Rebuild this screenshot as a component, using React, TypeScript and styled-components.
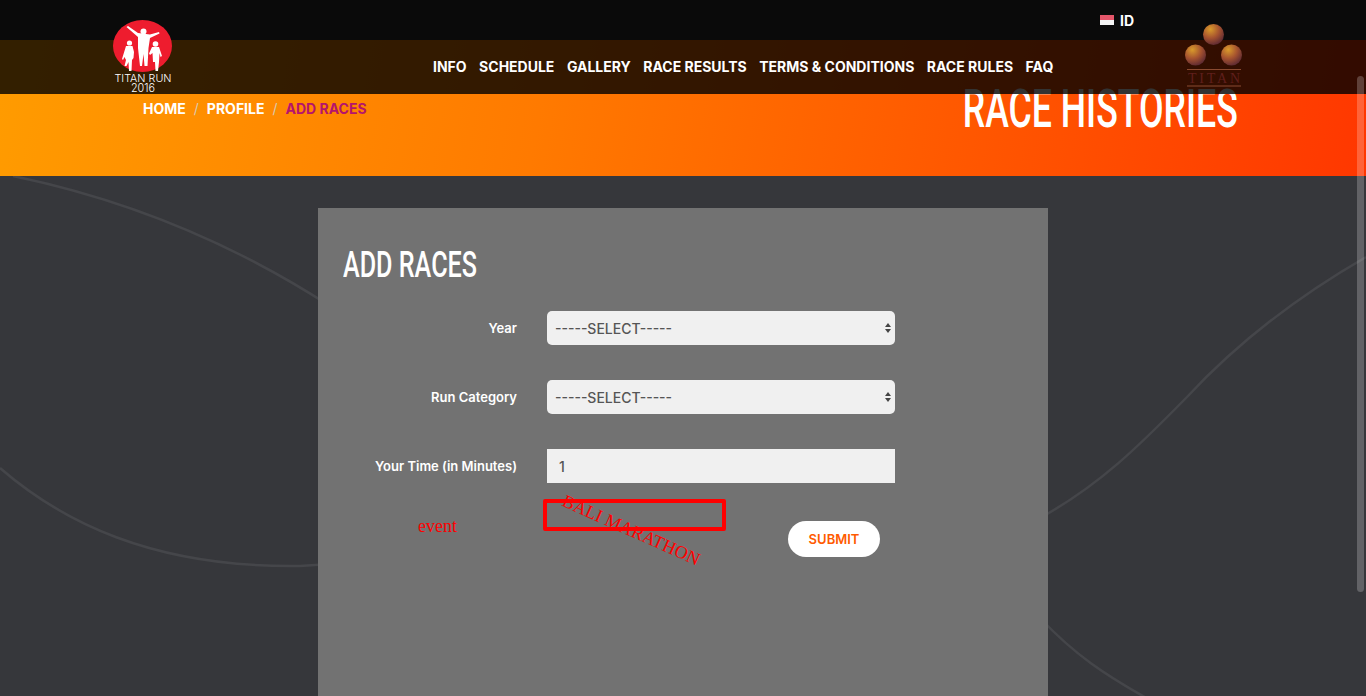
import React from 'react';
import styled, { createGlobalStyle } from 'styled-components';

const GlobalStyle = createGlobalStyle`
    html, body {
        margin: 0;
        height: 100%;
        overflow: hidden;
        background: #36373b;
    }
    * { box-sizing: border-box; }
`;

const Page = styled.div`
    position: relative;
    height: 696px;
    overflow: hidden;
    font-family: Inter, "Open Sans", sans-serif;
`;

const Header = styled.header`
    position: absolute;
    top: 0;
    left: 0;
    right: 0;
    z-index: 3;
`;

const TopBar = styled.div`
    height: 40px;
    background: #0a0a0a;
    display: flex;
    justify-content: flex-end;
    align-items: center;
    padding-right: 232px;
`;

const Lang = styled.a`
    display: flex;
    align-items: center;
    gap: 6px;
    color: #fff;
    font-size: 14px;
    font-weight: 700;
`;

const Flag = styled.span`
    width: 14px;
    height: 10px;
    background: linear-gradient(#e5566a 50%, #f4f4f4 50%);
`;

const NavBand = styled.nav`
    height: 54px;
    background: rgba(0, 0, 0, 0.8);
    display: flex;
    align-items: center;
    gap: 12.5px;
    padding: 0 0 2px 433px;
`;

const NavLink = styled.a`
    color: #fff;
    font-size: 14px;
    font-weight: 700;
    white-space: nowrap;
`;

const LogoSlot = styled.div<{ $left: number; $top: number }>`
    position: absolute;
    left: ${p => p.$left}px;
    top: ${p => p.$top}px;
    line-height: 0;
`;

const Hero = styled.section`
    height: 176px;
    background: linear-gradient(100deg, #ff9c00 0%, #ff7a00 40%, #ff3700 100%);
    display: flex;
    justify-content: space-between;
    padding: 80px 128px 0 143px;
`;

const Breadcrumb = styled.ol`
    list-style: none;
    margin: 20px 0 0;
    padding: 0;
    display: flex;
    gap: 8px;
    font-size: 14px;
    font-weight: 700;
    height: 17px;
    line-height: 17px;
`;

const Crumb = styled.li<{ $active?: boolean }>`
    color: ${p => (p.$active ? '#b5146c' : '#fff')};
`;

const Slash = styled.li`
    color: #d8c9b0;
    font-weight: 400;
`;

const HeroTitle = styled.h1`
    margin: 0;
    color: #fff;
    font-family: Roboto, sans-serif;
    font-weight: 500;
    font-size: 54px;
    line-height: 58px;
    white-space: nowrap;
    transform: scaleX(0.66);
    transform-origin: right top;
`;

const Main = styled.main`
    position: relative;
    height: 520px;
    display: flex;
    justify-content: center;
    padding: 32px 0 0;
    overflow: hidden;
`;

const Curves = styled.svg`
    position: absolute;
    left: 0;
    top: -176px;
`;

const Panel = styled.div`
    position: relative;
    width: 730px;
    margin-right: 0;
    background: #727272;
    padding: 36px 25px 0;
`;

const PanelTitle = styled.h2`
    margin: 0 0 26px;
    color: #fff;
    font-family: Roboto, sans-serif;
    font-weight: 500;
    font-size: 37px;
    line-height: 41px;
    white-space: nowrap;
    transform: scaleX(0.68);
    transform-origin: left top;
`;

const Row = styled.div`
    display: grid;
    grid-template-columns: 174px 348px;
    column-gap: 30px;
    align-items: center;
    margin-bottom: 35px;
`;

const Label = styled.label`
    color: #fff;
    font-size: 13px;
    font-weight: 600;
    text-align: right;
    white-space: nowrap;
`;

const SelectWrap = styled.div`
    position: relative;
    height: 34px;

    &::before, &::after {
        content: '';
        position: absolute;
        right: 4px;
        border-left: 3.5px solid transparent;
        border-right: 3.5px solid transparent;
    }
    &::before {
        top: 12px;
        border-bottom: 4px solid #444;
    }
    &::after {
        top: 18px;
        border-top: 4px solid #444;
    }
`;

const Select = styled.select`
    appearance: none;
    width: 100%;
    height: 34px;
    padding: 0 8px;
    border: 0;
    border-radius: 5px;
    background: #f0f0f0;
    color: #555;
    font-family: Inter, sans-serif;
    font-size: 14px;
    font-weight: 500;
`;

const TimeInput = styled.input`
    width: 100%;
    height: 34px;
    padding: 0 12px;
    border: 0;
    background: #f0f0f0;
    color: #555;
    font-family: Inter, sans-serif;
    font-size: 14px;
    font-weight: 500;
`;

const EventRow = styled.div`
    display: flex;
    align-items: flex-start;
    margin-top: -19px;
    font-family: "Liberation Serif", serif;
    color: #f00;
`;

const EventLabel = styled.span`
    width: 125px;
    margin: 17px 0 0 75px;
    font-size: 18px;
    line-height: 20px;
`;

const EventBox = styled.div`
    position: relative;
    width: 183px;
    height: 32px;
    border: 4px solid #f00;
    border-radius: 2px;
`;

const EventName = styled.span`
    position: absolute;
    left: 10px;
    top: 17px;
    font-size: 18px;
    line-height: 20px;
    white-space: nowrap;
    transform: rotate(24deg);
`;

const SubmitButton = styled.button`
    width: 92px;
    height: 36px;
    margin: 22px 0 0 62px;
    border: 0;
    border-radius: 18px;
    background: #fff;
    color: #ff5a00;
    font-family: Inter, sans-serif;
    font-size: 13px;
    font-weight: 600;
`;

const ScrollThumb = styled.div`
    position: absolute;
    top: 76px;
    right: 2px;
    width: 7px;
    height: 516px;
    border-radius: 4px;
    background: rgba(255, 255, 255, 0.22);
    z-index: 4;
`;

const navItems = ['INFO', 'SCHEDULE', 'GALLERY', 'RACE RESULTS', 'TERMS & CONDITIONS', 'RACE RULES', 'FAQ'];

const RunLogo = () => (
    <svg width="75" height="80" viewBox="0 0 75 80">
        <ellipse cx="37.5" cy="31" rx="29.5" ry="26" fill="#ee1c2e" />
        <g fill="#fff">
            <circle cx="38.5" cy="16.5" r="3" />
            <path d="M21.5 12 L23 11 L33 18 L45 19.5 L54 17 L54.5 18.5 L45 23 L43.5 33 L42.5 51 L39.5 51 L38.5 39 L37 51 L35 51 L33 33 L33 22 Z" />
            <circle cx="24.5" cy="28" r="2.6" />
            <path d="M21 31 L27.5 31 L29 37 L28.5 43 L27 45 L26.5 56 L24 56 L23.5 47 L21.5 51 L19.5 51 L21 45 L19.5 42 L18 45 L17 44 Z" />
            <circle cx="50.5" cy="29" r="2.8" />
            <path d="M47 32 L54 32 L57 41 L55.5 42 L54.5 38 L54 47 L53 56 L50.5 56 L50 47 L48 47 L47.5 38 L45 40 L44 38.5 Z" />
        </g>
        <text x="38" y="66.5" textAnchor="middle" fill="#fff" fontFamily="Inter, sans-serif" fontWeight="300" fontSize="10.5" textLength="57" lengthAdjust="spacingAndGlyphs">TITAN RUN</text>
        <text x="38" y="76.5" textAnchor="middle" fill="#fff" fontFamily="Inter, sans-serif" fontWeight="300" fontSize="11" textLength="24" lengthAdjust="spacingAndGlyphs">2016</text>
    </svg>
);

const TitanLogo = () => (
    <svg width="75" height="80" viewBox="0 0 75 80">
        <defs>
            <radialGradient id="sphere" cx="0.35" cy="0.25" r="0.85">
                <stop offset="0" stopColor="#d99a2b" />
                <stop offset="0.5" stopColor="#a5522f" />
                <stop offset="1" stopColor="#4f2233" />
            </radialGradient>
        </defs>
        <circle cx="38.5" cy="19.5" r="10.5" fill="url(#sphere)" />
        <circle cx="20.5" cy="40" r="10.5" fill="url(#sphere)" />
        <circle cx="56.5" cy="40" r="10.5" fill="url(#sphere)" />
        <rect x="12" y="54" width="54" height="1" fill="#8a4a30" />
        <rect x="12" y="70.5" width="54" height="1" fill="#8a4a30" />
        <text x="39" y="68" textAnchor="middle" fill="#5f1f1c" fontFamily="'Liberation Serif', serif" fontSize="14" textLength="52" lengthAdjust="spacing">TITAN</text>
    </svg>
);

const App = () => {
    return (
        <React.Fragment>
            <GlobalStyle />
            <Page>
                <Header>
                    <TopBar>
                        <Lang><Flag />ID</Lang>
                    </TopBar>
                    <NavBand>
                        {navItems.map(item => (
                            <NavLink key={item}>{item}</NavLink>
                        ))}
                    </NavBand>
                    <LogoSlot $left={105} $top={15}><RunLogo /></LogoSlot>
                    <LogoSlot $left={1175} $top={15}><TitanLogo /></LogoSlot>
                </Header>
                <Hero>
                    <Breadcrumb>
                        <Crumb>HOME</Crumb>
                        <Slash>/</Slash>
                        <Crumb>PROFILE</Crumb>
                        <Slash>/</Slash>
                        <Crumb $active>ADD RACES</Crumb>
                    </Breadcrumb>
                    <HeroTitle>RACE HISTORIES</HeroTitle>
                </Hero>
                <Main>
                    <Curves width="1366" height="696" viewBox="0 0 1366 696" fill="none" stroke="#45464a" strokeWidth="2.5">
                        <path d="M13 176 C110 196 220 235 330 306" />
                        <path d="M0 468 C60 520 150 568 300 566 L330 564" />
                        <path d="M1040 518 C1100 485 1140 445 1187 397 C1240 340 1300 295 1366 257" />
                        <path d="M1040 618 C1075 655 1105 675 1150 700" />
                    </Curves>
                    <Panel>
                        <PanelTitle>ADD RACES</PanelTitle>
                        <Row>
                            <Label>Year</Label>
                            <SelectWrap>
                                <Select defaultValue=""><option value="">-----SELECT-----</option></Select>
                            </SelectWrap>
                        </Row>
                        <Row>
                            <Label>Run Category</Label>
                            <SelectWrap>
                                <Select defaultValue=""><option value="">-----SELECT-----</option></Select>
                            </SelectWrap>
                        </Row>
                        <Row>
                            <Label>Your Time (in Minutes)</Label>
                            <TimeInput defaultValue="1" readOnly />
                        </Row>
                        <EventRow>
                            <EventLabel>event</EventLabel>
                            <EventBox>
                                <EventName>BALI MARATHON</EventName>
                            </EventBox>
                            <SubmitButton>SUBMIT</SubmitButton>
                        </EventRow>
                    </Panel>
                </Main>
                <ScrollThumb />
            </Page>
        </React.Fragment>
    );
};

export default App;
